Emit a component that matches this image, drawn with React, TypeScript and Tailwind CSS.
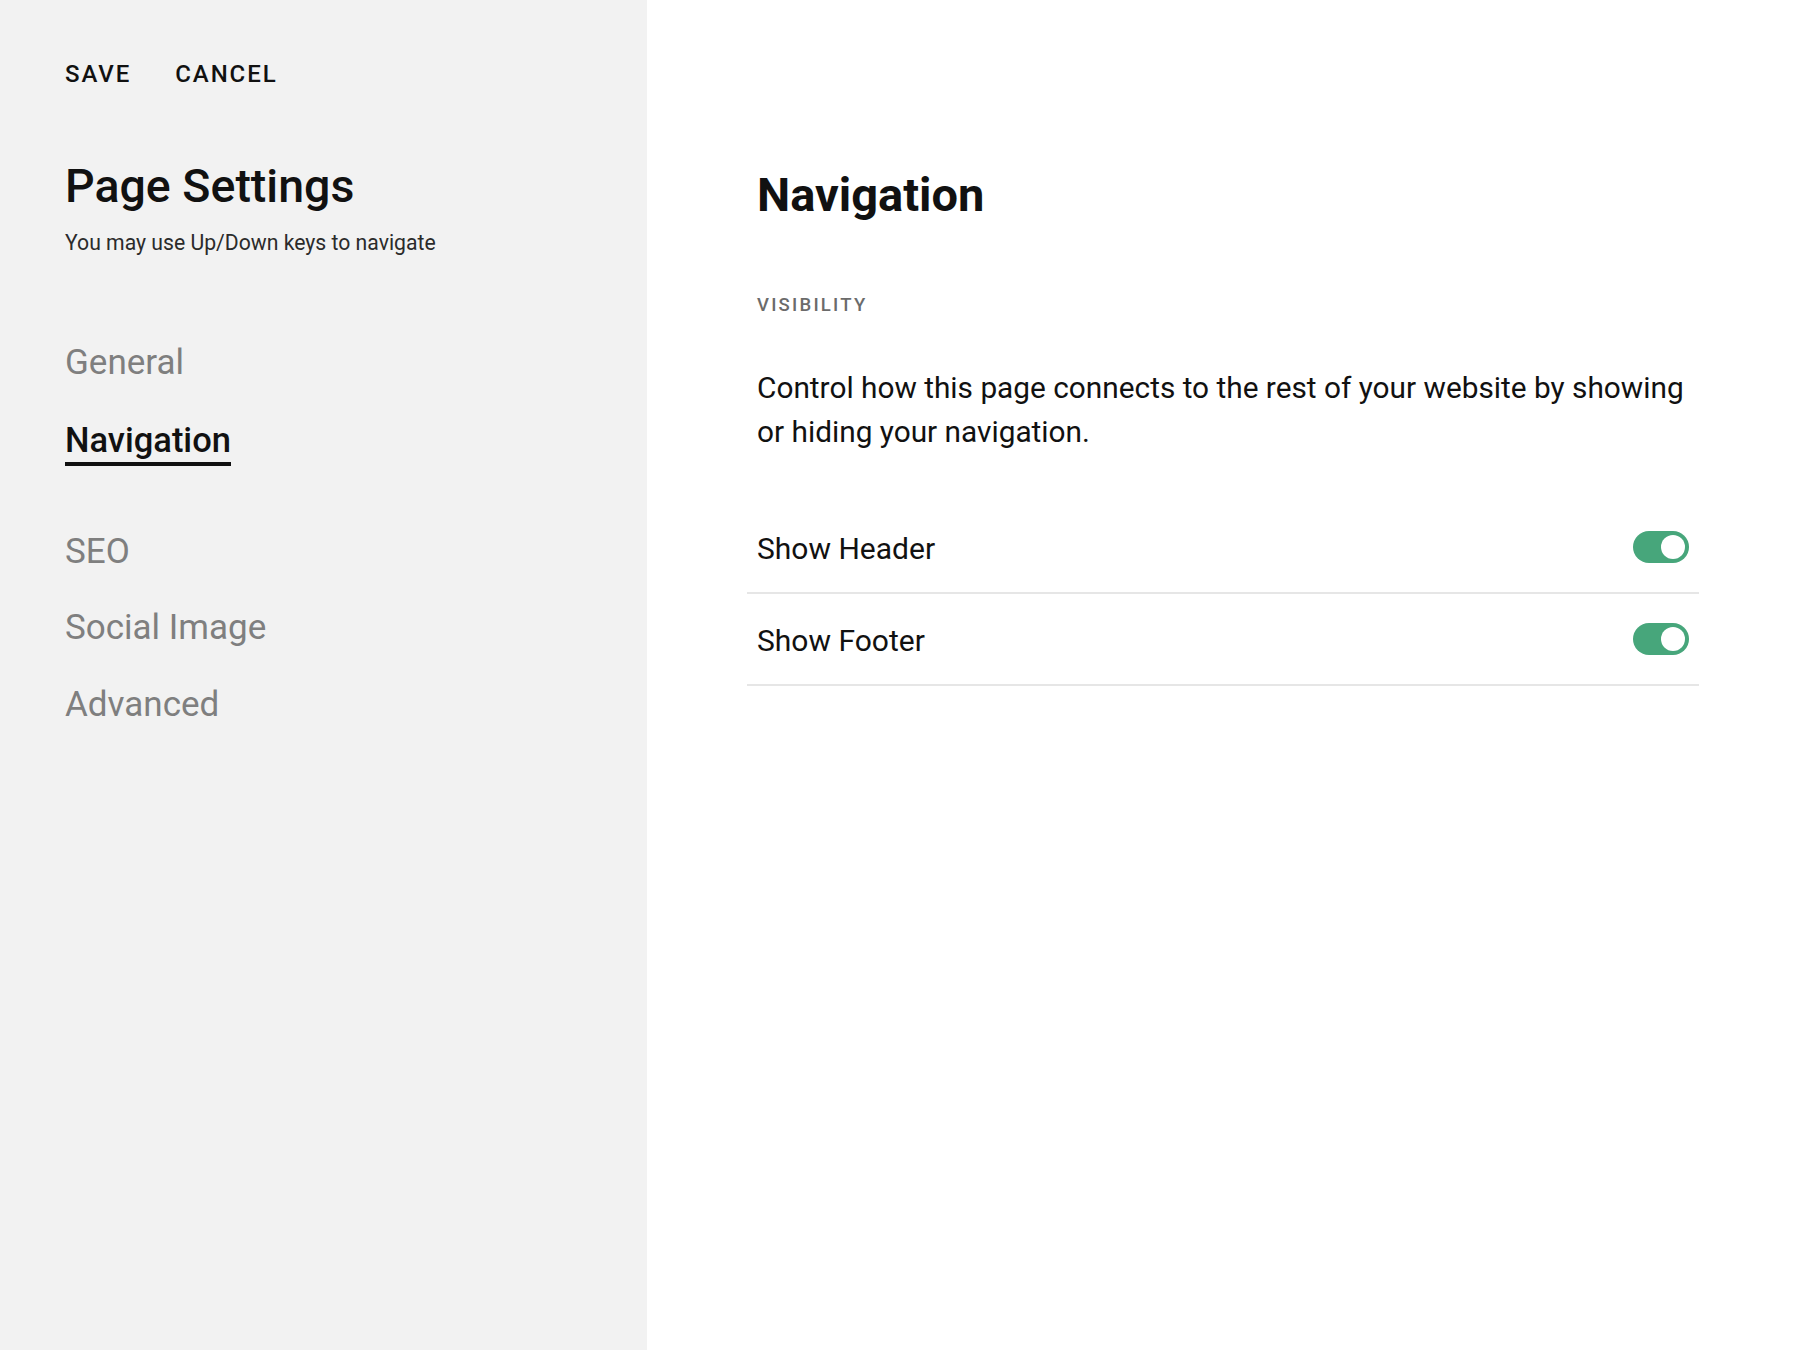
import React from "react";

const font = { fontFamily: "Roboto, 'Liberation Sans', Arial, sans-serif" };

function Toggle() {
  return (
    <div className="flex h-[32px] w-[56px] items-center justify-end rounded-full bg-[#47a67b] pr-[4px]">
      <div className="h-[24px] w-[24px] rounded-full bg-white" />
    </div>
  );
}

function Row({ label }: { label: string }) {
  return (
    <div className="border-b-2 border-[#e6e6e6]">
      <div className="flex h-[90px] items-center justify-between px-[10px]">
        <span className="pt-[2px] text-[30px] text-[#111]">{label}</span>
        <Toggle />
      </div>
    </div>
  );
}

export default function App() {
  const items = ["SEO", "Social Image", "Advanced"];
  return (
    <div className="flex h-[1350px] w-full bg-white" style={font}>
      <aside className="flex w-[647px] shrink-0 flex-col bg-[#f2f2f2] pl-[65px] pt-[60px]">
        <div className="flex gap-[44px] text-[24px] font-medium leading-[28px] tracking-[0.08em] text-[#111]">
          <span>SAVE</span>
          <span>CANCEL</span>
        </div>
        <h1 className="mt-[72px] text-[46.5px] font-medium leading-[52px] text-[#111]">Page Settings</h1>
        <p className="mt-[19px] text-[21.2px] leading-[24px] text-[#2b2b2b]">You may use Up/Down keys to navigate</p>
        <nav className="mt-[88px] flex flex-col items-start text-[35px] leading-[40px]">
          <span className="text-[#7f7f7f]">General</span>
          <span className="mt-[37px] flex flex-col items-stretch font-medium text-[#111]">
            <span className="text-[34.5px]">Navigation</span>
            <span className="mt-[2px] h-[4px] bg-[#111]" />
          </span>
          <span className="mt-[66px] text-[#7f7f7f]">{items[0]}</span>
          <span className="mt-[36px] text-[#7f7f7f]">{items[1]}</span>
          <span className="mt-[37px] text-[#7f7f7f]">{items[2]}</span>
        </nav>
      </aside>
      <main className="flex-1 pl-[100px] pt-[169px]">
        <div className="w-[952px]">
          <div className="px-[10px]">
            <h2 className="text-[47px] font-bold leading-[52px] text-[#111]">Navigation</h2>
            <div className="mt-[73px] text-[18.5px] font-medium leading-[22px] tracking-[0.12em] text-[#6b6b6b]">VISIBILITY</div>
            <p className="mt-[50px] w-[948px] text-[29.8px] leading-[44px] text-[#111]">
              Control how this page connects to the rest of your website by showing or hiding your navigation.
            </p>
          </div>
          <div className="mt-[48px]">
            <Row label="Show Header" />
            <Row label="Show Footer" />
          </div>
        </div>
      </main>
    </div>
  );
}
